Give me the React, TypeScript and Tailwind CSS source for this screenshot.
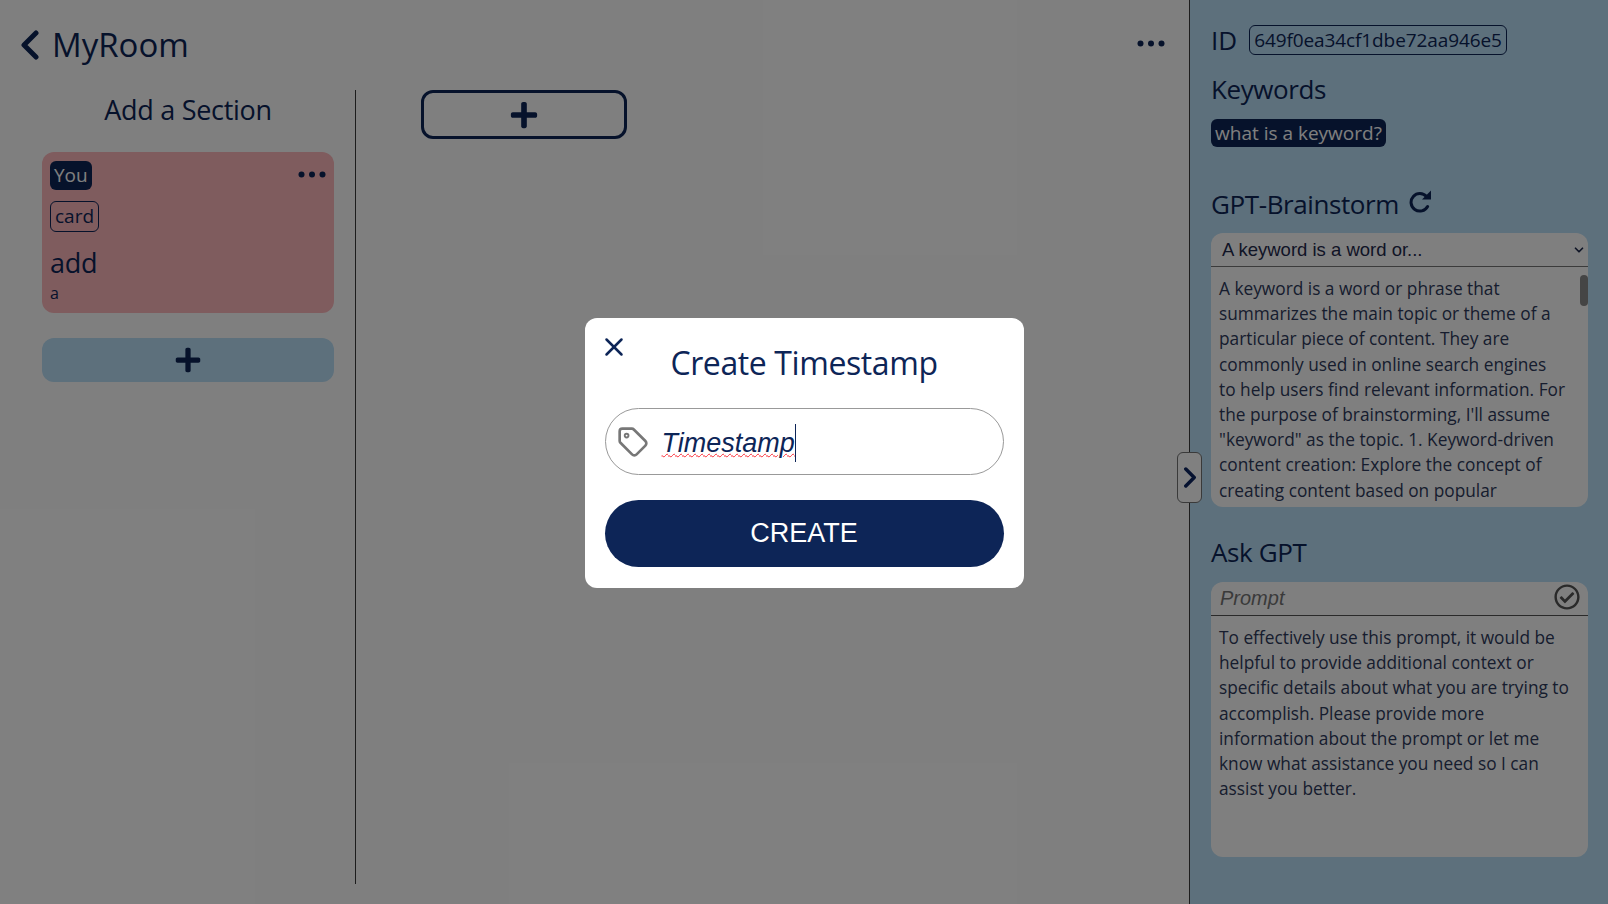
import { X, ChevronDown } from "lucide-react";
import { FaPlus, FaRegCheckCircle } from "react-icons/fa";

function Dots({ size }: { size: number }) {
  return (
    <svg width={size} height={size / 4} viewBox="0 0 28 7" fill="currentColor">
      <circle cx="3.5" cy="3.5" r="3" />
      <circle cx="14" cy="3.5" r="3" />
      <circle cx="24.5" cy="3.5" r="3" />
    </svg>
  );
}

function Chevron({ dir, className }: { dir: "left" | "right"; className: string }) {
  return (
    <svg className={className} viewBox="0 0 20 30" fill="none" stroke="currentColor" strokeWidth="5" strokeLinecap="round" strokeLinejoin="round">
      <polyline points={dir === "left" ? "16,3 4,15 16,27" : "4,3 16,15 4,27"} />
    </svg>
  );
}

function TagIcon({ className }: { className: string }) {
  return (
    <svg className={className} viewBox="0 0 24 24" fill="none" stroke="currentColor" strokeWidth="2" strokeLinecap="round" strokeLinejoin="round">
      <path d="M12.586 2.586A2 2 0 0 0 11.172 2H4a2 2 0 0 0-2 2v7.172a2 2 0 0 0 .586 1.414l8.704 8.704a2.426 2.426 0 0 0 3.42 0l6.58-6.58a2.426 2.426 0 0 0 0-3.42z" />
      <circle cx="7.2" cy="7.2" r="1.4" strokeWidth="1.4" />
    </svg>
  );
}

function RefreshIcon({ className }: { className: string }) {
  return (
    <svg className={className} viewBox="0 0 24 24">
      <path d="M17.5 7.5A8.8 8.8 0 1 0 18.6 17.5" fill="none" stroke="currentColor" strokeWidth="3" strokeLinecap="round" />
      <polygon points="22,1.5 22,10.5 13,10.5" fill="currentColor" />
    </svg>
  );
}

export default function App() {
  return (
    <div className="relative flex h-[904px] w-full overflow-hidden bg-white font-['Open_Sans','Noto_Sans',sans-serif] text-[#0d2557]">
      <main className="flex w-[1189px] shrink-0 flex-col">
        <header className="flex h-[90px] items-start justify-between pl-5 pr-[24px] pt-[26px]">
          <div className="flex items-center gap-[12px]">
            <Chevron dir="left" className="h-[30px] w-[20px]" />
            <h1 className="text-[33px] leading-[38px]">MyRoom</h1>
          </div>
          <div className="mt-[14px]">
            <Dots size={28} />
          </div>
        </header>
        <div className="flex h-[794px]">
          <section className="flex w-[356px] shrink-0 flex-col border-r border-[#3a3a3a] pl-[42px] pr-[21px]">
            <h2 className="mb-[20px] h-[42px] text-center text-[27px] leading-[40px] tracking-[-0.3px]">Add a Section</h2>
            <article className="h-[161px] rounded-xl bg-[#feb8bc] px-2 pt-[9px]">
              <div className="flex items-start justify-between">
                <span className="rounded-md bg-[#0d2557] px-[4px] text-[19px] leading-[29px] text-white">You</span>
                <span className="mt-[10px]">
                  <Dots size={28} />
                </span>
              </div>
              <span className="mt-[11px] block w-fit rounded-md border border-[#0d2557] px-[4px] text-[19px] leading-[29px]">card</span>
              <div className="mt-[12px] text-[27px] leading-[38px] tracking-[-0.3px]">add</div>
              <div className="mt-[1px] text-[16px] leading-[20px]">a</div>
            </article>
            <button className="mt-[25px] flex h-[44px] items-center justify-center rounded-xl bg-[#bae0f8]">
              <FaPlus className="h-[28px] w-[28px]" />
            </button>
          </section>
          <section className="pl-[65px]">
            <button className="flex h-[49px] w-[206px] items-center justify-center rounded-xl border-[3px] border-[#0d2557]">
              <FaPlus className="h-[30px] w-[30px]" />
            </button>
          </section>
        </div>
      </main>

      <aside className="relative flex-1 border-l border-[#3a3a3a] bg-[#bae0f8] pl-[21px] pr-[20px] pt-[25px]">
        <div className="flex items-center gap-[12px]">
          <span className="text-[26px] leading-[30px]">ID</span>
          <span className="rounded-md border border-[#0d2557] px-[4px] text-[19px] leading-[28px] tracking-[-0.1px]">649f0ea34cf1dbe72aa946e5</span>
        </div>
        <h3 className="mt-[14px] text-[26px] leading-[40px] tracking-[-0.4px]">Keywords</h3>
        <span className="mt-[10px] block w-fit rounded-md bg-[#0d2557] px-[4px] text-[19px] leading-[28px] text-white">what is a keyword?</span>
        <div className="mt-[37px] flex items-center gap-[10px]">
          <h3 className="text-[26px] leading-[40px] tracking-[-0.4px]">GPT-Brainstorm</h3>
          <RefreshIcon className="mb-[6px] h-[24px] w-[24px]" />
        </div>
        <div className="relative mt-[9px] h-[274px] overflow-hidden rounded-xl bg-white">
          <div className="flex h-[34px] items-center justify-between border-b border-[#777] pl-[11px] pr-[2px] font-['Liberation_Sans',sans-serif] text-[18.5px] text-[#1f2a4d]">
            <span>A keyword is a word or...</span>
            <ChevronDown className="h-[14px] w-[14px]" strokeWidth={3} />
          </div>
          <p className="whitespace-nowrap px-2 pt-[9px] text-[17.3px] leading-[25.2px] text-[#2e3a5c]">
            A keyword is a word or phrase that<br />
            summarizes the main topic or theme of a<br />
            particular piece of content. They are<br />
            commonly used in online search engines<br />
            to help users find relevant information. For<br />
            the purpose of brainstorming, I'll assume<br />
            "keyword" as the topic. 1. Keyword-driven<br />
            content creation: Explore the concept of<br />
            creating content based on popular
          </p>
          <div className="absolute right-0 top-[42px] h-[31px] w-[8px] rounded-full bg-[#8a8a8a]" />
        </div>
        <h3 className="mt-[25px] text-[26px] leading-[40px] tracking-[-0.4px]">Ask GPT</h3>
        <div className="mt-[10px] h-[275px] overflow-hidden rounded-xl bg-white">
          <div className="flex h-[34px] items-start justify-between border-b border-[#555] pl-[9px] pr-[8px] pt-[2px]">
            <span className="font-['Liberation_Sans',sans-serif] text-[20px] italic leading-[28px] text-[#757575]">Prompt</span>
            <FaRegCheckCircle className="h-[26px] w-[26px] text-[#555]" />
          </div>
          <p className="whitespace-nowrap px-2 pt-[9px] text-[17.3px] leading-[25.2px] text-[#2e3a5c]">
            To effectively use this prompt, it would be<br />
            helpful to provide additional context or<br />
            specific details about what you are trying to<br />
            accomplish. Please provide more<br />
            information about the prompt or let me<br />
            know what assistance you need so I can<br />
            assist you better.
          </p>
        </div>
      </aside>

      <div className="absolute inset-0 flex items-center justify-center bg-black/50">
        <button className="absolute left-[1177px] top-[452px] flex h-[51px] w-[25px] items-center justify-center rounded-md border border-[#3a3a3a] bg-[#808080] text-[#061230]">
          <Chevron dir="right" className="h-[21px] w-[14px]" />
        </button>
        <div className="relative mt-[2px] w-[439px] rounded-xl bg-white px-5 pb-[21px] pt-[21px]">
          <button className="absolute left-[14px] top-[14px]">
            <X className="h-[30px] w-[30px]" strokeWidth={2} />
          </button>
          <h2 className="text-center text-[32px] leading-[48px] tracking-[-0.4px]">Create Timestamp</h2>
          <div className="mt-[21px] flex h-[67px] items-center gap-[13px] rounded-full border border-[#999] pl-[11px]">
            <TagIcon className="h-[32px] w-[32px] text-[#777]" />
            <span className="mt-[3px] border-r border-[#0d2557] font-['Liberation_Sans',sans-serif] text-[27px] italic leading-[38px] underline decoration-red-500 decoration-wavy decoration-1 underline-offset-1">Timestamp</span>
          </div>
          <button className="mt-[25px] flex h-[67px] w-full items-center justify-center rounded-full bg-[#0d2557] font-['Liberation_Sans',sans-serif] text-[27px] text-white">CREATE</button>
        </div>
      </div>
    </div>
  );
}
